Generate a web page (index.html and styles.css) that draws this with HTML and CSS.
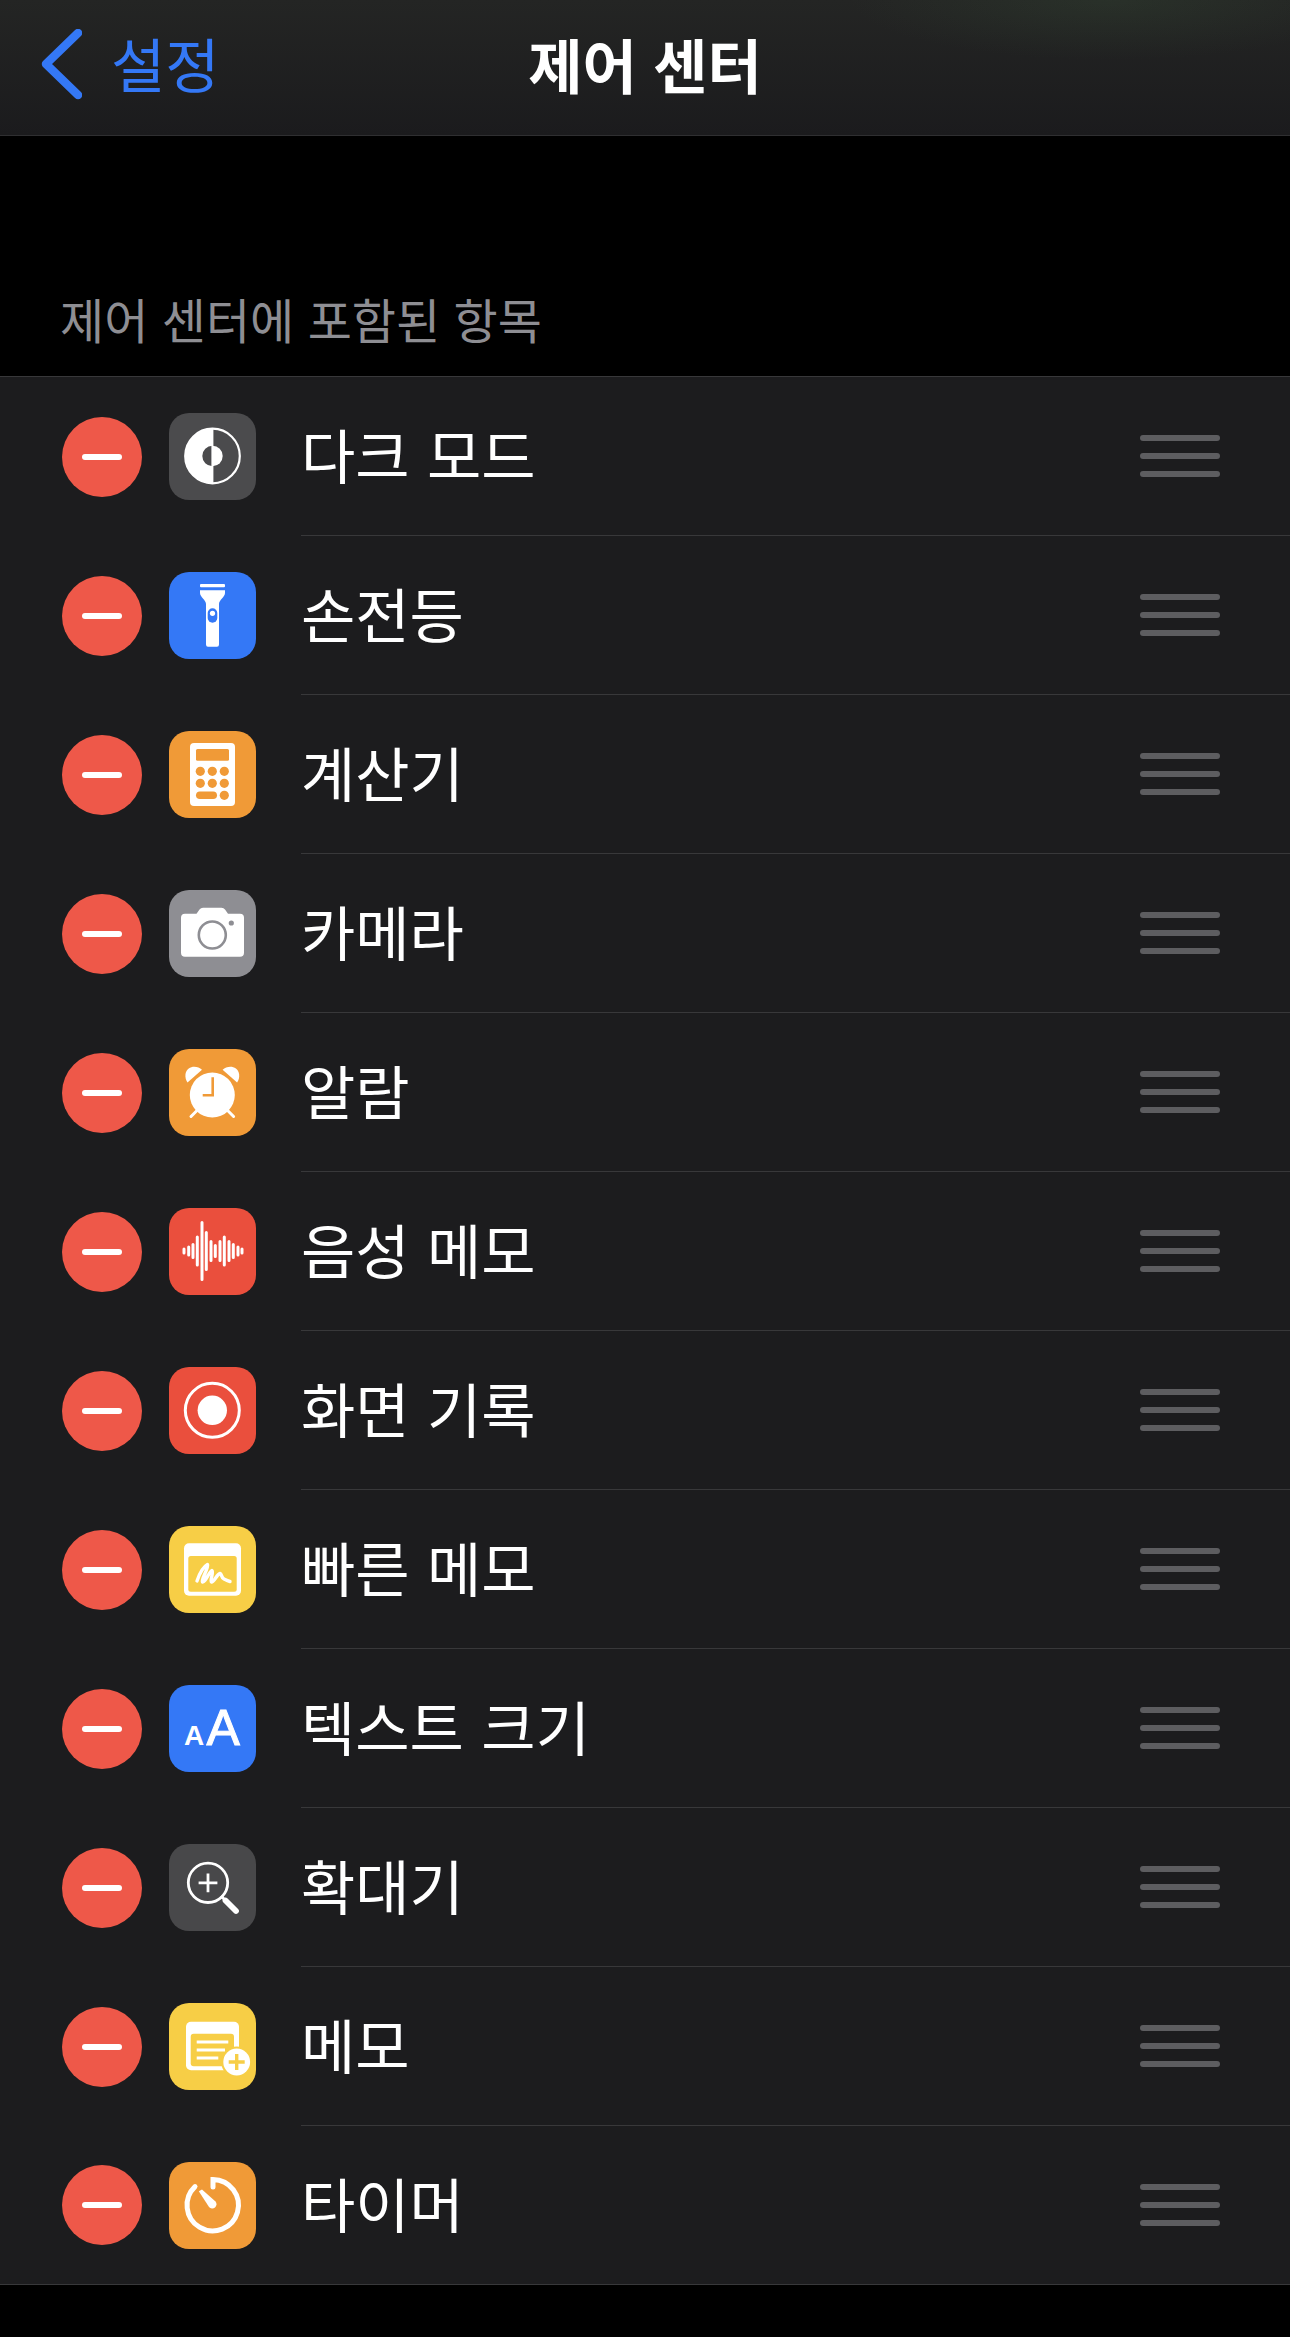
FILE: index.html
```html
<!DOCTYPE html>
<html lang="ko">
  <head>
    <meta charset="UTF-8" />
    <title>제어 센터</title>
    <meta name="viewport" content="width=device-width, initial-scale=1" />
    <link rel="stylesheet" href="styles.css">
  </head>
  <body>
    <header class="nav">
      <a class="back">
        <svg class="back-icon" viewBox="0 0 42 72"><path d="M38 4 L6 35 L38 66"/></svg>
        <span>설정</span>
      </a>
      <h1>제어 센터</h1>
    </header>

    <div class="section-title">제어 센터에 포함된 항목</div>

    <ul class="list">
      <li class="row">
        <span class="minus"></span>
        <svg class="app-icon gray-dark" viewBox="0 0 87 87">
          <circle cx="43.5" cy="43" r="27.3" fill="none" stroke="#fff" stroke-width="2.2"/>
          <path d="M43.5 15.7 A27.3 27.3 0 0 0 43.5 70.3 Z" fill="#fff"/>
          <path d="M43.5 32.8 A10.2 10.2 0 0 0 43.5 53.2 Z" fill="#4b4b4d"/>
          <path d="M43.5 32.8 A10.2 10.2 0 0 1 43.5 53.2 Z" fill="#fff"/>
          <rect x="42.4" y="15" width="2" height="56" fill="#fff"/>
        </svg>
        <div class="row-body"><span class="label">다크 모드</span><span class="grip"><i></i><i></i><i></i></span></div>
      </li>
      <li class="row">
        <span class="minus"></span>
        <svg class="app-icon blue" viewBox="0 0 87 87">
          <rect x="31" y="12" width="25" height="3.3" rx="1" fill="#fff"/>
          <path d="M31 18.3 H56 V21 C56 25 50 28 50 32 V72.5 Q50 74.7 48 74.7 H39 Q37 74.7 37 72.5 V32 C37 28 31 25 31 21 Z" fill="#fff"/>
          <rect x="38.7" y="36.3" width="9.6" height="14.4" rx="4.8" fill="#3478f6"/>
          <circle cx="43.5" cy="41.3" r="2.6" fill="#fff"/>
        </svg>
        <div class="row-body"><span class="label">손전등</span><span class="grip"><i></i><i></i><i></i></span></div>
      </li>
      <li class="row">
        <span class="minus"></span>
        <svg class="app-icon orange" viewBox="0 0 87 87">
          <rect x="21" y="12" width="45" height="63" rx="4" fill="#fff"/>
          <rect x="27" y="18" width="33" height="11.7" rx="1.5" fill="#f09a37"/>
          <g fill="#f09a37">
            <circle cx="31.3" cy="40.3" r="4.6"/><circle cx="43.3" cy="40.3" r="4.6"/><circle cx="55.3" cy="40.3" r="4.6"/>
            <circle cx="31.3" cy="52.3" r="4.6"/><circle cx="43.3" cy="52.3" r="4.6"/><circle cx="55.3" cy="52.3" r="4.6"/>
            <rect x="27" y="60.5" width="21" height="7.6" rx="3.8"/><circle cx="55.3" cy="64.3" r="4.6"/>
          </g>
        </svg>
        <div class="row-body"><span class="label">계산기</span><span class="grip"><i></i><i></i><i></i></span></div>
      </li>
      <li class="row">
        <span class="minus"></span>
        <svg class="app-icon gray" viewBox="0 0 87 87">
          <path d="M16 23.7 H27.5 L30.5 19.5 Q31.8 17.7 34 17.7 H52.5 Q54.7 17.7 56 19.5 L59 23.7 H71 Q75 23.7 75 27.7 V62.7 Q75 66.7 71 66.7 H16 Q12 66.7 12 62.7 V27.7 Q12 23.7 16 23.7 Z" fill="#fff"/>
          <circle cx="43.3" cy="45" r="13.5" fill="none" stroke="#8e8e93" stroke-width="2.6"/>
          <circle cx="62.3" cy="33" r="2.6" fill="#8e8e93"/>
        </svg>
        <div class="row-body"><span class="label">카메라</span><span class="grip"><i></i><i></i><i></i></span></div>
      </li>
      <li class="row">
        <span class="minus"></span>
        <svg class="app-icon orange" viewBox="0 0 87 87">
          <circle cx="43.3" cy="46" r="22.5" fill="#fff"/>
          <path d="M33 20.7 C28 16 18 16.5 16.5 25 C16 28.5 17 31.5 18.5 33.5 Z" fill="#fff"/>
          <path d="M53.6 20.7 C58.6 16 68.6 16.5 70.1 25 C70.6 28.5 69.6 31.5 68.1 33.5 Z" fill="#fff"/>
          <path d="M22 67.5 L27.5 62 M64.6 67.5 L59.1 62" stroke="#fff" stroke-width="3" stroke-linecap="round"/>
          <path d="M43.7 28.3 V46.2 H33.7" fill="none" stroke="#f09a37" stroke-width="2.6"/>
        </svg>
        <div class="row-body"><span class="label">알람</span><span class="grip"><i></i><i></i><i></i></span></div>
      </li>
      <li class="row">
        <span class="minus"></span>
        <svg class="app-icon red" viewBox="0 0 87 87">
          <g stroke="#fff" stroke-width="3" stroke-linecap="round">
            <path d="M15 41 V45 M19.7 39 V47 M24 36.5 V49.5 M28.3 29 V57 M33 14.5 V71.5 M37.3 24.5 V61.5 M42 33.5 V52.5 M46.3 37.5 V48.5 M51 33.5 V52.5 M55.3 29 V57 M60 33.5 V52.5 M64.3 36.5 V49.5 M69 39 V47 M73 41 V45"/>
          </g>
        </svg>
        <div class="row-body"><span class="label">음성 메모</span><span class="grip"><i></i><i></i><i></i></span></div>
      </li>
      <li class="row">
        <span class="minus"></span>
        <svg class="app-icon red" viewBox="0 0 87 87">
          <circle cx="43.3" cy="43.3" r="27" fill="none" stroke="#fff" stroke-width="3"/>
          <circle cx="43.3" cy="43.3" r="14.7" fill="#fff"/>
        </svg>
        <div class="row-body"><span class="label">화면 기록</span><span class="grip"><i></i><i></i><i></i></span></div>
      </li>
      <li class="row">
        <span class="minus"></span>
        <svg class="app-icon yellow" viewBox="0 0 87 87">
          <rect x="15" y="17.3" width="57" height="52.4" rx="5" fill="#fff"/>
          <rect x="19.3" y="30" width="48.4" height="35.7" rx="2.5" fill="#f7ce46"/>
          <path d="M28 55 C30 49 34 41 38.5 38.5 C40 42 31.5 54 33.5 56 C36 57 40 46 43 44.5 C45 46 40.5 55 42.5 56 C45 56.5 48 48 51 47.5 C53 48 52 51.5 55 53 C57 54 59 55 61 55.5" fill="none" stroke="#fff" stroke-width="3.4" stroke-linecap="round" stroke-linejoin="round"/>
        </svg>
        <div class="row-body"><span class="label">빠른 메모</span><span class="grip"><i></i><i></i><i></i></span></div>
      </li>
      <li class="row">
        <span class="minus"></span>
        <svg class="app-icon blue" viewBox="0 0 87 87">
          <text class="aa-small" x="15" y="59.7">A</text>
          <text class="aa-big" x="37.5" y="59.7">A</text>
        </svg>
        <div class="row-body"><span class="label">텍스트 크기</span><span class="grip"><i></i><i></i><i></i></span></div>
      </li>
      <li class="row">
        <span class="minus"></span>
        <svg class="app-icon gray-mag" viewBox="0 0 87 87">
          <circle cx="39" cy="38.8" r="19.7" fill="none" stroke="#fff" stroke-width="2.8"/>
          <path d="M39 29.4 V48.2 M29.6 38.8 H48.4" stroke="#fff" stroke-width="2.8"/>
          <path d="M52 52 L57 57" stroke="#fff" stroke-width="2.8"/>
          <path d="M56.5 56.5 L67 67" stroke="#fff" stroke-width="5.8" stroke-linecap="round"/>
        </svg>
        <div class="row-body"><span class="label">확대기</span><span class="grip"><i></i><i></i><i></i></span></div>
      </li>
      <li class="row">
        <span class="minus"></span>
        <svg class="app-icon yellow" viewBox="0 0 87 87">
          <rect x="17" y="18.7" width="53" height="48.6" rx="5" fill="#fff"/>
          <rect x="21.7" y="30.7" width="43.3" height="32.6" rx="3" fill="#f7ce46"/>
          <path d="M27.7 39 H59.3 M27.7 47 H56 M27.7 55 H49.3" stroke="#fff" stroke-width="3"/>
          <circle cx="67.7" cy="59" r="15.5" fill="#f7ce46"/>
          <circle cx="67.7" cy="59" r="13.4" fill="#fff"/>
          <path d="M67.7 51 V67 M59.7 59 H75.7" stroke="#f7ce46" stroke-width="3.4"/>
        </svg>
        <div class="row-body"><span class="label">메모</span><span class="grip"><i></i><i></i><i></i></span></div>
      </li>
      <li class="row">
        <span class="minus"></span>
        <svg class="app-icon orange" viewBox="0 0 87 87">
          <path d="M44 25 V17.5 A25.7 25.7 0 1 1 26 24.6" fill="none" stroke="#fff" stroke-width="5" stroke-linecap="round"/>
          <path d="M29.8 29.2 L33 27.5 L46.5 39.5 A4.2 4.2 0 1 1 40 45 Z" fill="#fff"/>
        </svg>
        <div class="row-body"><span class="label">타이머</span><span class="grip"><i></i><i></i><i></i></span></div>
      </li>
    </ul>
  </body>
</html>
```

FILE: styles.css
```css
* {
  box-sizing: border-box;
}

html,
body {
  margin: 0;
  background: #000;
}

body {
  font-family: "Noto Sans CJK KR", "Liberation Sans", sans-serif;
  color: #fff;
  overflow: hidden;
}

.nav {
  position: relative;
  height: 136px;
  padding-bottom: 9px;
  display: flex;
  align-items: center;
  justify-content: center;
  background:
    radial-gradient(ellipse 260px 60px at 1110px 0, rgba(60, 90, 60, 0.22), transparent),
    linear-gradient(#242524, #1b1b1d);
  border-bottom: 1px solid #2f2f31;
}

.nav h1 {
  margin: 0;
  font-size: 59px;
  font-weight: 700;
}

.back {
  position: absolute;
  left: 40px;
  top: 0;
  height: 125px;
  display: flex;
  align-items: center;
  gap: 29px;
  color: #3478f6;
  font-size: 59px;
}

.back-icon {
  width: 42px;
  height: 72px;
  margin-top: 5px;
  fill: none;
  stroke: #3478f6;
  stroke-width: 8.5;
  stroke-linecap: round;
  stroke-linejoin: round;
}

.section-title {
  height: 240px;
  padding: 0 0 22px 60px;
  display: flex;
  align-items: flex-end;
  color: #8e8e93;
  font-size: 48px;
  line-height: 72px;
}

.list {
  list-style: none;
  margin: 0;
  padding: 0;
  background: #1c1c1e;
  border-top: 1px solid #38383a;
  border-bottom: 1px solid #38383a;
}

.row {
  height: 159px;
  display: flex;
  align-items: center;
  padding-left: 62px;
}

.row:last-child {
  height: 158px;
}

.minus {
  width: 80px;
  height: 80px;
  flex: none;
  border-radius: 50%;
  background: #ee5849;
  display: flex;
  align-items: center;
  justify-content: center;
}

.minus::before {
  content: "";
  width: 40px;
  height: 6px;
  border-radius: 3px;
  background: #fff;
}

.app-icon {
  width: 87px;
  height: 87px;
  flex: none;
  margin-left: 27px;
  border-radius: 20px;
}

.gray-dark { background: #4b4b4d; }
.gray-mag { background: #48484a; }
.gray { background: #8e8e93; }
.blue { background: #3478f6; }
.orange { background: #f09a37; }
.red { background: #ea4f3d; }
.yellow { background: #f7ce46; }

.aa-small,
.aa-big {
  font-family: "Liberation Sans", sans-serif;
  fill: #fff;
}

.aa-small {
  font-size: 28px;
  font-weight: 700;
}

.aa-big {
  font-size: 50px;
  stroke: #fff;
  stroke-width: 1;
}

.row-body {
  flex: 1;
  align-self: stretch;
  margin-left: 45px;
  padding-right: 70px;
  display: flex;
  align-items: center;
  justify-content: space-between;
  border-bottom: 1px solid #38383a;
}

.row:last-child .row-body {
  border-bottom: 0;
}

.label {
  padding-bottom: 5px;
  font-size: 59px;
  word-spacing: 1px;
}

.grip {
  width: 80px;
  display: flex;
  flex-direction: column;
  gap: 11.7px;
}

.grip i {
  height: 6px;
  border-radius: 3px;
  background: #5d5d60;
}
```
